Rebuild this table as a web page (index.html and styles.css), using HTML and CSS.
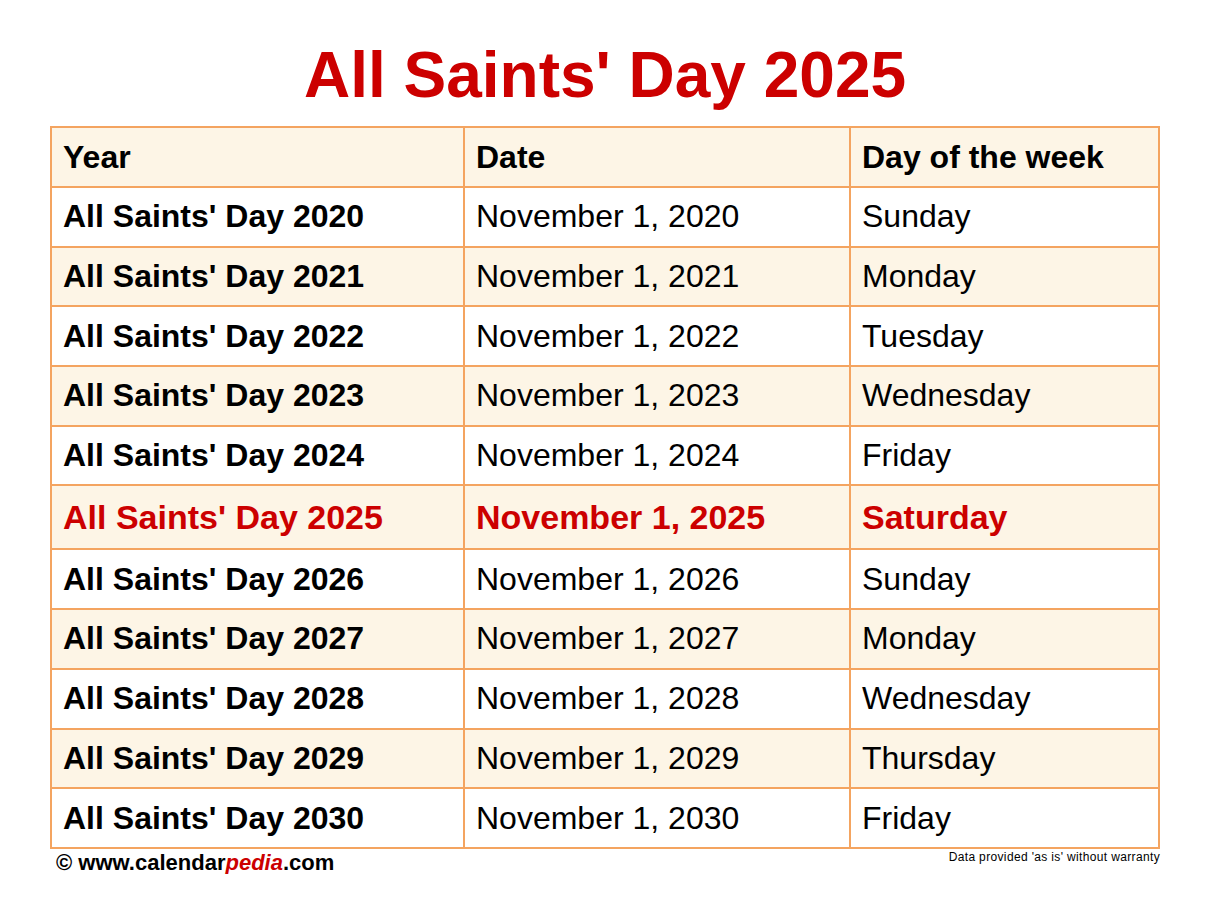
FILE: index.html
```html
<!DOCTYPE html>
<html>
<head>
<meta charset="utf-8">
<title>All Saints' Day 2025</title>
<link rel="stylesheet" href="styles.css">
</head>
<body>
<div class="page">
  <h1 class="title">All Saints' Day 2025</h1>
  <div class="grid">
    <div class="cell head">Year</div><div class="cell head">Date</div><div class="cell head">Day of the week</div>
    <div class="cell b">All Saints' Day 2020</div><div class="cell">November 1, 2020</div><div class="cell">Sunday</div>
    <div class="cell alt b">All Saints' Day 2021</div><div class="cell alt">November 1, 2021</div><div class="cell alt">Monday</div>
    <div class="cell b">All Saints' Day 2022</div><div class="cell">November 1, 2022</div><div class="cell">Tuesday</div>
    <div class="cell alt b">All Saints' Day 2023</div><div class="cell alt">November 1, 2023</div><div class="cell alt">Wednesday</div>
    <div class="cell b">All Saints' Day 2024</div><div class="cell">November 1, 2024</div><div class="cell">Friday</div>
    <div class="cell alt hl">All Saints' Day 2025</div><div class="cell alt hl">November 1, 2025</div><div class="cell alt hl">Saturday</div>
    <div class="cell b">All Saints' Day 2026</div><div class="cell">November 1, 2026</div><div class="cell">Sunday</div>
    <div class="cell alt b">All Saints' Day 2027</div><div class="cell alt">November 1, 2027</div><div class="cell alt">Monday</div>
    <div class="cell b">All Saints' Day 2028</div><div class="cell">November 1, 2028</div><div class="cell">Wednesday</div>
    <div class="cell alt b">All Saints' Day 2029</div><div class="cell alt">November 1, 2029</div><div class="cell alt">Thursday</div>
    <div class="cell b">All Saints' Day 2030</div><div class="cell">November 1, 2030</div><div class="cell">Friday</div>
  </div>
  <div class="footer">
    <div class="brand">© www.calendar<span class="pedia">pedia</span>.com</div>
    <div class="disclaimer">Data provided 'as is' without warranty</div>
  </div>
</div>
</body>
</html>
```

FILE: styles.css
```css
html, body {
  margin: 0;
  padding: 0;
  background: #ffffff;
}

.page {
  width: 1210px;
  padding: 43px 50px 0;
  box-sizing: border-box;
  font-family: "Liberation Sans", Arial, sans-serif;
  color: #000000;
}

.title {
  margin: 0;
  font-size: 64px;
  line-height: 64px;
  font-weight: bold;
  color: #cc0000;
  text-align: center;
}

.grid {
  margin-top: 19px;
  display: grid;
  grid-template-columns: 411px 384px 307px;
  grid-template-rows: 58px repeat(5, 57.7px) 62px repeat(5, 57.7px);
  gap: 2px;
  padding: 2px;
  background: #f4a460;
}

.cell {
  background: #ffffff;
  display: flex;
  align-items: center;
  padding-left: 11px;
  font-size: 32px;
  white-space: nowrap;
}

.head,
.alt {
  background: #fdf5e6;
}

.head,
.b {
  font-weight: bold;
}

.hl {
  font-weight: bold;
  color: #cc0000;
  font-size: 34px;
}

.footer {
  display: flex;
  justify-content: space-between;
  align-items: flex-start;
  padding: 1px 0 0 6px;
}

.brand {
  font-size: 22px;
  line-height: 22px;
  font-weight: bold;
  margin-top: 2px;
}

.pedia {
  color: #cc0000;
  font-style: italic;
}

.disclaimer {
  font-size: 12px;
  line-height: 14px;
  letter-spacing: 0.35px;
}
```
